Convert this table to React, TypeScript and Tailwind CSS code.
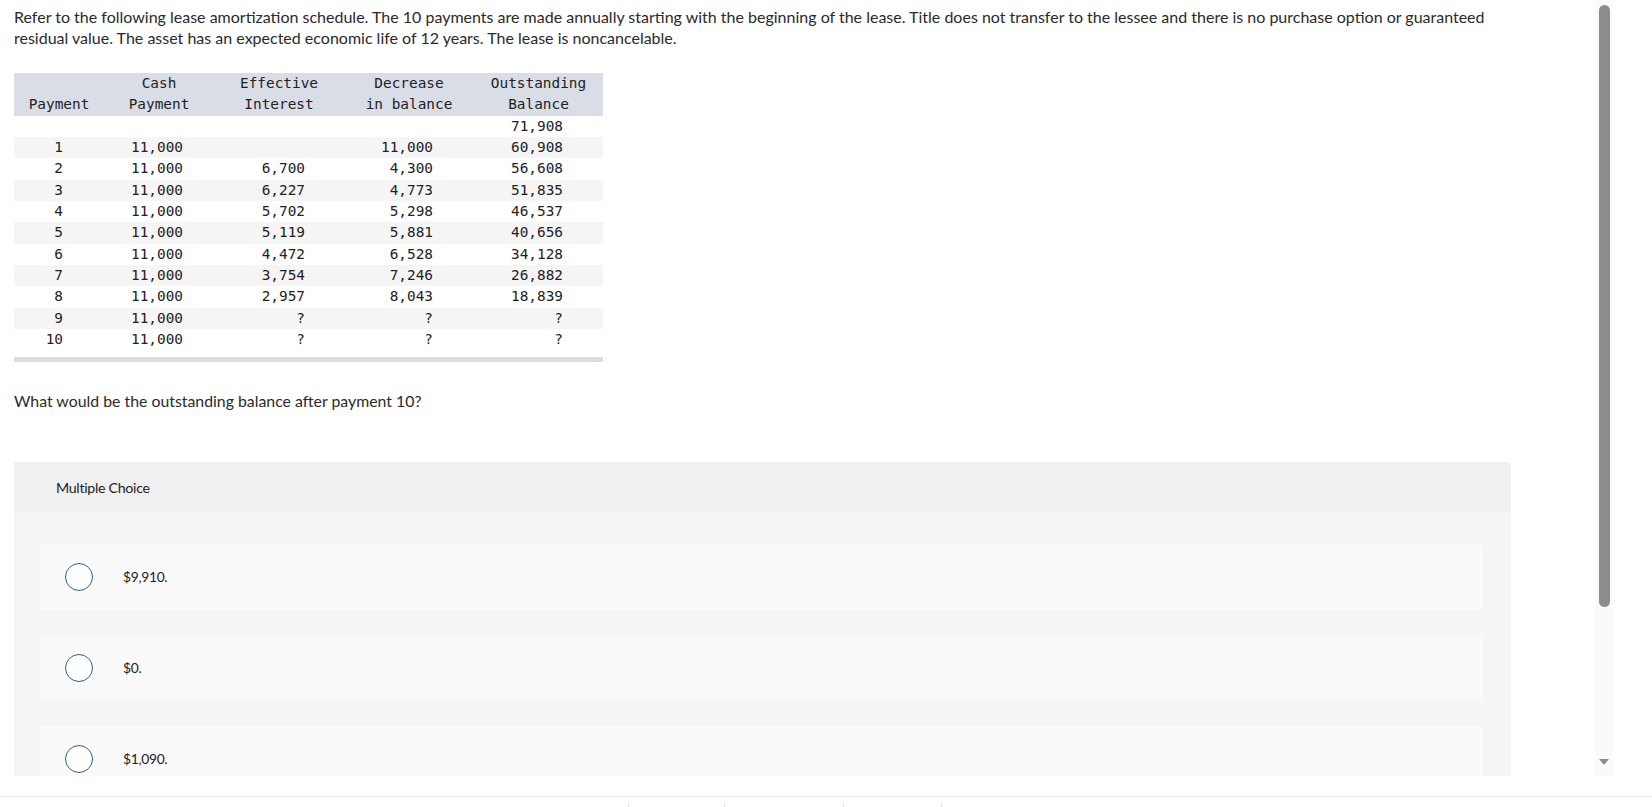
import React from "react";

type Row = {
  pay: string;
  cash: string;
  interest: string;
  decrease: string;
  balance: string;
};

const rows: Row[] = [
  { pay: "", cash: "", interest: "", decrease: "", balance: "71,908" },
  { pay: "1", cash: "11,000", interest: "", decrease: "11,000", balance: "60,908" },
  { pay: "2", cash: "11,000", interest: "6,700", decrease: "4,300", balance: "56,608" },
  { pay: "3", cash: "11,000", interest: "6,227", decrease: "4,773", balance: "51,835" },
  { pay: "4", cash: "11,000", interest: "5,702", decrease: "5,298", balance: "46,537" },
  { pay: "5", cash: "11,000", interest: "5,119", decrease: "5,881", balance: "40,656" },
  { pay: "6", cash: "11,000", interest: "4,472", decrease: "6,528", balance: "34,128" },
  { pay: "7", cash: "11,000", interest: "3,754", decrease: "7,246", balance: "26,882" },
  { pay: "8", cash: "11,000", interest: "2,957", decrease: "8,043", balance: "18,839" },
  { pay: "9", cash: "11,000", interest: "?", decrease: "?", balance: "?" },
  { pay: "10", cash: "11,000", interest: "?", decrease: "?", balance: "?" },
];

const choices = ["$9,910.", "$0.", "$1,090."];

function Schedule() {
  return (
    <div className="mt-[25px] w-[589px] font-['DejaVu_Sans_Mono',monospace] text-[14.4px] leading-[21.33px] text-[#222]">
      <div className="grid grid-cols-[90px_110px_130px_130px_129px] bg-[#d9dde6] text-center">
        <div className="pt-[21.33px]">Payment</div>
        <div>
          Cash
          <br />
          Payment
        </div>
        <div>
          Effective
          <br />
          Interest
        </div>
        <div>
          Decrease
          <br />
          in balance
        </div>
        <div>
          Outstanding
          <br />
          Balance
        </div>
      </div>
      {rows.map((r, i) => (
        <div
          key={i}
          className={`grid h-[21.33px] grid-cols-[90px_110px_130px_130px_129px] text-right ${
            i % 2 === 1 ? "bg-[#f5f5f5]" : "bg-white"
          }`}
        >
          <div className="pr-[41px]">{r.pay}</div>
          <div className="pr-[31px]">{r.cash}</div>
          <div className="pr-[39px]">{r.interest}</div>
          <div className="pr-[41px]">{r.decrease}</div>
          <div className="pr-[40px]">{r.balance}</div>
        </div>
      ))}
      <div className="mt-[6.67px] h-[5px] bg-[#d9dde6]" />
    </div>
  );
}

function Choice({ label }: { label: string }) {
  return (
    <div className="flex h-[66px] items-center rounded-[4px] bg-[#fafafa] pl-[25px]">
      <span className="h-[28px] w-[28px] shrink-0 rounded-full border-[1.6px] border-[#2d5f8e] bg-white" />
      <span className="ml-[30px] text-[13.8px] tracking-[-0.3px] text-[#222]">{label}</span>
    </div>
  );
}

export default function App() {
  return (
    <div className="relative h-[807px] w-[1652px] overflow-hidden bg-white font-['Lato',sans-serif] text-[#2a2a2a]">
      <div className="flex h-[776px]">
        <div className="ml-[14px] w-[1497px] overflow-hidden pt-[6px]">
          <p className="text-[16px] leading-[21px]">
            Refer to the following lease amortization schedule. The 10 payments are made annually starting with the
            beginning of the lease. Title does not transfer to the lessee and there is no purchase option or guaranteed
            <br />
            residual value. The asset has an expected economic life of 12 years. The lease is noncancelable.
          </p>

          <Schedule />

          <p className="mt-[28.5px] text-[15.85px] leading-[21px]">What would be the outstanding balance after payment 10?</p>

          <div className="mt-[51px] rounded-t-[3px] bg-[#f5f5f5]">
            <div className="flex h-[50px] items-center rounded-t-[3px] bg-[#f0f0f0] pl-[42px] text-[14.2px] tracking-[-0.3px] text-[#222]">
              Multiple Choice
            </div>
            <div className="flex flex-col gap-[25px] pb-[30px] pl-[26px] pr-[28px] pt-[32px]">
              {choices.map((c) => (
                <Choice key={c} label={c} />
              ))}
            </div>
          </div>
        </div>

        <div className="ml-[84px] flex w-[18px] flex-col items-center bg-[#fafafa] pt-[5px]">
          <div className="h-[602px] w-[11px] rounded-full bg-[#8c8c8c]" />
          <div className="mt-auto mb-[11px] h-0 w-0 border-x-[5px] border-t-[6px] border-x-transparent border-t-[#8c8c8c]" />
        </div>
      </div>

      <div className="mt-[20px] border-t border-[#ececec]">
        <div className="flex h-[10px] items-end pb-0">
          <span className="ml-[628px] h-[5px] w-px bg-[#e6e6e6]" />
          <span className="ml-[95px] h-[5px] w-px bg-[#e6e6e6]" />
          <span className="ml-[118px] h-[5px] w-px bg-[#e6e6e6]" />
          <span className="ml-[97px] h-[5px] w-px bg-[#e6e6e6]" />
        </div>
      </div>
    </div>
  );
}
